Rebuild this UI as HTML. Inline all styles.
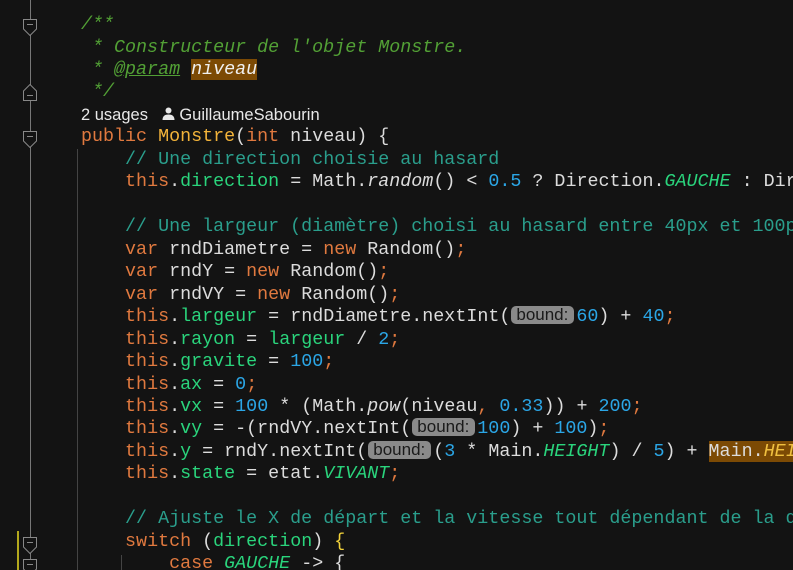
<!DOCTYPE html>
<html><head><meta charset="utf-8"><style>
html,body{margin:0;padding:0;background:#131313;width:793px;height:570px;overflow:hidden;position:relative}
#w{position:absolute;left:0;top:0;width:793px;height:570px;overflow:hidden}
.l{position:absolute;left:81px;height:22.47px;line-height:22.47px;white-space:pre;font-family:"Liberation Mono",monospace;font-size:18.35px;color:#dcdcdc}
.k{color:#e0793f}.f{color:#2ad47c}.c{color:#2a9e8c}.d{color:#52a035;font-style:italic}.n{color:#2ba6e6}.y{color:#f2b33a}.i{font-style:italic}.b{color:#f3d33a}
.h{background:#7c4a04}
.p{display:inline-block;background:#8a8a8a;color:#1a1a1a;font-family:"Liberation Sans",sans-serif;font-size:17px;line-height:18px;border-radius:5px;padding:0 6px 0 5px;margin:0 2px 0 1px;vertical-align:1px}
.u{position:absolute;left:81px;top:104px;font-family:"Liberation Sans",sans-serif;font-size:16.5px;color:#e8e8e8;line-height:22px;white-space:pre}
.v{position:absolute;width:1px;background:#444}
.fold{position:absolute;left:23px;width:14px;height:17px}
</style></head><body><div id="w">
<div class="v" style="left:30px;top:0;height:570px;background:#777"></div>
<div class="v" style="left:77px;top:149px;height:421px"></div>
<div class="v" style="left:121px;top:555px;height:15px"></div>
<div style="position:absolute;left:17px;top:531px;width:2px;height:39px;background:#b3a81c"></div>
<svg class="fold" style="top:19px" viewBox="0 0 14 17"><path d="M0.5 0.5H13.5V10L7 16.5L0.5 10Z" fill="#131313" stroke="#888"/><path d="M4 5.5H10" stroke="#888"/></svg>
<svg class="fold" style="top:84px" viewBox="0 0 14 17"><path d="M0.5 16.5H13.5V7L7 0.5L0.5 7Z" fill="#131313" stroke="#888"/><path d="M4 11.5H10" stroke="#888"/></svg>
<svg class="fold" style="top:131px" viewBox="0 0 14 17"><path d="M0.5 0.5H13.5V10L7 16.5L0.5 10Z" fill="#131313" stroke="#888"/><path d="M4 5.5H10" stroke="#888"/></svg>
<svg class="fold" style="top:537px" viewBox="0 0 14 17"><path d="M0.5 0.5H13.5V10L7 16.5L0.5 10Z" fill="#131313" stroke="#888"/><path d="M4 5.5H10" stroke="#888"/></svg>
<svg class="fold" style="top:559px" viewBox="0 0 14 17"><path d="M0.5 0.5H13.5V10L7 16.5L0.5 10Z" fill="#131313" stroke="#888"/><path d="M4 5.5H10" stroke="#888"/></svg>

<div class="l d" style="top:14px">/**</div>
<div class="l d" style="top:36.5px"> * Constructeur de l'objet Monstre.</div>
<div class="l d" style="top:59px"> * <u>@param</u> <span class="h" style="color:#f0f0f0">niveau</span></div>
<div class="l d" style="top:81.4px"> */</div>
<div class="u">2 usages   <svg width="13" height="13" viewBox="0 0 13 13" style="vertical-align:0px"><circle cx="6.5" cy="3.5" r="3" fill="#e8e8e8"/><path d="M0.5 13C0.5 9 3 7.5 6.5 7.5S12.5 9 12.5 13Z" fill="#e8e8e8"/></svg> GuillaumeSabourin</div>
<div class="l" style="top:126.4px"><span class="k">public </span><span class="y">Monstre</span>(<span class="k">int</span> niveau) {</div>
<div class="l" style="top:148.8px">    <span class="c">// Une direction choisie au hasard</span></div>
<div class="l" style="top:171.3px">    <span class="k">this</span>.<span class="f">direction</span> = Math.<span class="i">random</span>() &lt; <span class="n">0.5</span> ? Direction.<span class="f i">GAUCHE</span> : Direction.<span class="f i">DROITE</span>;</div>
<div class="l" style="top:216.2px">    <span class="c">// Une largeur (diamètre) choisi au hasard entre 40px et 100px</span></div>
<div class="l" style="top:238.7px">    <span class="k">var</span> rndDiametre = <span class="k">new</span> Random()<span class="k">;</span></div>
<div class="l" style="top:261.2px">    <span class="k">var</span> rndY = <span class="k">new</span> Random()<span class="k">;</span></div>
<div class="l" style="top:283.6px">    <span class="k">var</span> rndVY = <span class="k">new</span> Random()<span class="k">;</span></div>
<div class="l" style="top:306.1px">    <span class="k">this</span>.<span class="f">largeur</span> = rndDiametre.nextInt(<span class="p">bound:</span><span class="n">60</span>) + <span class="n">40</span><span class="k">;</span></div>
<div class="l" style="top:328.6px">    <span class="k">this</span>.<span class="f">rayon</span> = <span class="f">largeur</span> / <span class="n">2</span><span class="k">;</span></div>
<div class="l" style="top:351px">    <span class="k">this</span>.<span class="f">gravite</span> = <span class="n">100</span><span class="k">;</span></div>
<div class="l" style="top:373.5px">    <span class="k">this</span>.<span class="f">ax</span> = <span class="n">0</span><span class="k">;</span></div>
<div class="l" style="top:396px">    <span class="k">this</span>.<span class="f">vx</span> = <span class="n">100</span> * (Math.<span class="i">pow</span>(niveau<span class="k">,</span> <span class="n">0.33</span>)) + <span class="n">200</span><span class="k">;</span></div>
<div class="l" style="top:418.4px">    <span class="k">this</span>.<span class="f">vy</span> = -(rndVY.nextInt(<span class="p">bound:</span><span class="n">100</span>) + <span class="n">100</span>)<span class="k">;</span></div>
<div class="l" style="top:440.9px">    <span class="k">this</span>.<span class="f">y</span> = rndY.nextInt(<span class="p">bound:</span>(<span class="n">3</span> * Main.<span class="f i">HEIGHT</span>) / <span class="n">5</span>) + <span class="h">Main.<span class="f i" style="color:#f0c040">HEIGHT</span></span></div>
<div class="l" style="top:463.4px">    <span class="k">this</span>.<span class="f">state</span> = etat.<span class="f i">VIVANT</span><span class="k">;</span></div>
<div class="l" style="top:508.3px">    <span class="c">// Ajuste le X de départ et la vitesse tout dépendant de la direction</span></div>
<div class="l" style="top:530.8px">    <span class="k">switch</span> (<span class="f">direction</span>) <span class="b">{</span></div>
<div class="l" style="top:553.2px">        <span class="k">case</span> <span class="f i">GAUCHE</span> -&gt; {</div>
</div></body></html>
